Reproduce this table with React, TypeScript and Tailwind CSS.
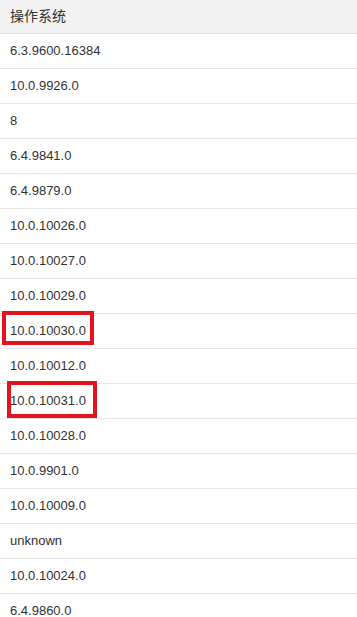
const versions = [
  '6.3.9600.16384',
  '10.0.9926.0',
  '8',
  '6.4.9841.0',
  '6.4.9879.0',
  '10.0.10026.0',
  '10.0.10027.0',
  '10.0.10029.0',
  '10.0.10030.0',
  '10.0.10012.0',
  '10.0.10031.0',
  '10.0.10028.0',
  '10.0.9901.0',
  '10.0.10009.0',
  'unknown',
  '10.0.10024.0',
  '6.4.9860.0',
];

export default function App() {
  return (
    <div
      className="relative w-[357px] h-[617px] overflow-hidden bg-white text-[#333]"
      style={{ fontFamily: '"Liberation Sans", Arial, "Noto Sans CJK SC", sans-serif' }}
    >
      <div className="flex h-[34px] items-center border-b border-[#e2e2e2] bg-[#f2f2f2] pl-[10px] text-[14px]">
        操作系统
      </div>
      {versions.map((v, i) => (
        <div
          key={i}
          className="flex h-[35px] items-center border-b border-[#e6e6e6] pl-[10px] text-[13px]"
        >
          {v}
        </div>
      ))}

      {/* highlight boxes */}
      <div className="pointer-events-none absolute left-[2px] top-[311px] h-[34px] w-[92px] border-[4px] border-[#e3141f]" />
      <div className="pointer-events-none absolute left-[7px] top-[381px] h-[37px] w-[90px] border-[4px] border-[#e3141f]" />
    </div>
  );
}
